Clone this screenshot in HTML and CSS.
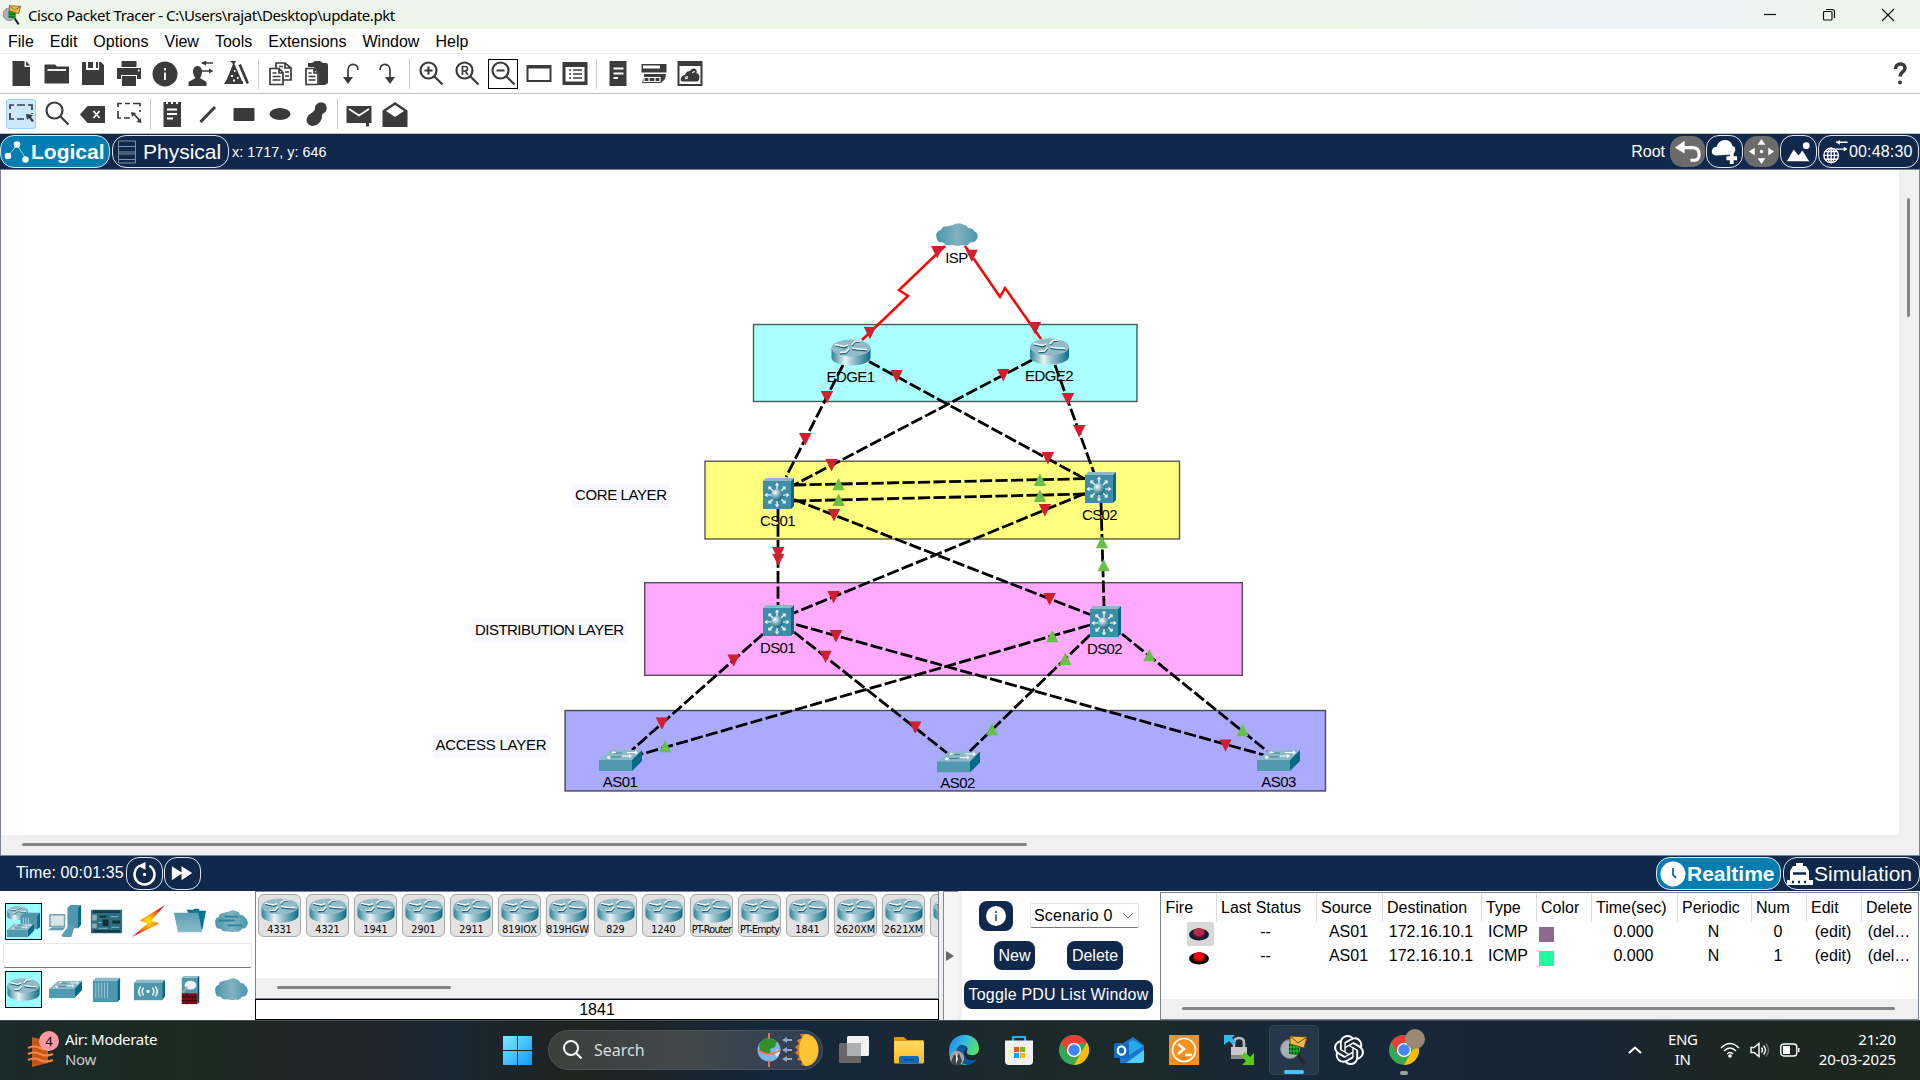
FILE: index.html
```html
<!DOCTYPE html>
<html lang="en">
<head>
<meta charset="utf-8">
<title>Cisco Packet Tracer</title>
<link rel="stylesheet" href="styles.css">
</head>
<body>
<svg class="defs" aria-hidden="true">
  <defs>
    <linearGradient id="metal" x1="0" x2="1" y1="0" y2="0"><stop offset="0" stop-color="#2b8199"/><stop offset=".35" stop-color="#e9f3f5"/><stop offset=".55" stop-color="#9cc4ce"/><stop offset="1" stop-color="#0b6d88"/></linearGradient>
    <linearGradient id="haze" x1="0" x2="1" y1="0" y2="0"><stop offset="0" stop-color="#4b97ad"/><stop offset=".5" stop-color="#80b2c1"/><stop offset="1" stop-color="#4b97ad"/></linearGradient>
    <linearGradient id="paper" x1="0" x2="0" y1="0" y2="1"><stop offset="0" stop-color="#5a9fb2"/><stop offset="1" stop-color="#8bbcc9"/></linearGradient>
    <radialGradient id="ball" cx=".35" cy=".3" r=".75"><stop offset="0" stop-color="#fff"/><stop offset=".5" stop-color="#75a9b8"/><stop offset="1" stop-color="#0b5d75"/></radialGradient>
    <radialGradient id="spark" cx=".5" cy=".5" r=".5"><stop offset="0" stop-color="#fff200"/><stop offset="1" stop-color="#f01818"/></radialGradient>
    <linearGradient id="win" x1="0" x2="1" y1="0" y2="1"><stop offset="0" stop-color="#7cecff"/><stop offset="1" stop-color="#1397f5"/></linearGradient>
    <linearGradient id="edgeg" x1="0" x2="1" y1="0" y2=".4"><stop offset="0" stop-color="#1b86dc"/><stop offset=".5" stop-color="#2fb8e6"/><stop offset="1" stop-color="#5fdf5c"/></linearGradient>
    <linearGradient id="fold" x1="0" x2="0" y1="0" y2="1"><stop offset="0" stop-color="#ffdb62"/><stop offset="1" stop-color="#f8bb22"/></linearGradient>
  </defs>
  <symbol id="router" viewBox="0 0 40 27" preserveAspectRatio="none">
    <path d="M.5 9v9.500C.5 23 9 26.500 20 26.500S39.500 23 39.500 18.500V9z" fill="url(#metal)"/>
    <ellipse cx="20" cy="9" rx="19.500" ry="8.500" fill="#92bac8"/>
    <path d="M4.500 6.500l9 2 3-1.500M21 7l2-3.500 6-1M21 10l6 1 9 .5M18 10.500l-3 3.500-6 .5" fill="none" stroke="#17677d" stroke-width="2.200"/>
    <path d="M4 5.500l9 2 4-1.500M20.500 6l3-3.500 6-.5M21 9l6 1 9 .5M18 9.500l-3 3.500-6 .5" fill="none" stroke="#fff" stroke-width="1.500"/>
  </symbol>
  <symbol id="l3" viewBox="0 0 31 31">
    <path d="M0 3l3-3h28l-3 3z" fill="#8db9c6"/><path d="M28 3l3-3v28l-3 3z" fill="#046a85"/>
    <rect y="3" width="28" height="28" fill="#3f8ea8"/>
    <g stroke="#fff" stroke-width="1.200" fill="none"><path d="M14 12V6M14 22v6M9 17H3M19 17h6M10.500 13.500L6 9M17.500 13.500L22 9M10.500 20.500L6 25M17.500 20.500L22 25"/><path d="M12.500 7.500L14 5.500l1.500 2M12.500 26.500l1.500 2 1.500-2M4.500 15.500l-2 1.500 2 1.500M23.500 15.500l2 1.500-2 1.500M6 11.500V9h2.500M19.500 9H22v2.500M6 22.500V25h2.500M19.500 25H22v-2.500"/></g>
    <circle cx="14" cy="17" r="6" fill="url(#ball)"/>
  </symbol>
  <symbol id="switch" viewBox="0 0 43 21" preserveAspectRatio="none">
    <path d="M0 10L12 0h31L33 10z" fill="#8db9c6"/><path d="M33 10L43 0v11L33 21z" fill="#046a85"/><path d="M0 10h33v11H0z" fill="#5199ae"/>
    <path d="M15 3h8M10 7h12" stroke="#3f8197" stroke-width="1"/>
    <path d="M28 2.500h9M36 1l2 1.500-2 1.500M23 6h8M30 4.500L32 6l-2 1.500M17 2.500h-3M15 1.500l-2 1.500M12 7h-3M10 6L8.500 7.500 11 8.500" stroke="#fff" stroke-width="1.100" fill="none"/>
  </symbol>
  <symbol id="cloud" viewBox="0 0 42 23" preserveAspectRatio="none">
    <path d="M7 19.500Q1 20 .5 14.500Q-1 8.500 5 7Q6 3 10 3.500Q14 2.500 17 2Q22-1 27 1.500Q31 2 32 5Q37 5 38 8Q42.500 10 41.500 14.500Q40 19.500 34.500 19.500Q31 24 26 22.300Q20 23.500 16 22Q10 23.500 7 19.500z" fill="url(#haze)"/>
  </symbol>
  <symbol id="down" viewBox="0 0 12 12"><path d="M0 0h12L6 12z" fill="#d01f2f"/></symbol>
  <symbol id="up" viewBox="0 0 12 12"><path d="M0 12h12L6 0z" fill="#6abf4b"/></symbol>
  <symbol id="chrome" viewBox="0 0 30 30">
    <circle cx="15" cy="15" r="15" fill="#35a852"/><path d="M15 30l6.500-11.500L28 7.500a15 15 0 0 1-13 22.500z" fill="#fbbc04"/><path d="M2 7.500L8.800 18.500 15 8h13A15 15 0 0 0 2 7.500z" fill="#e94235"/>
    <circle cx="15" cy="15" r="7.200" fill="#fff"/><circle cx="15" cy="15" r="5.700" fill="#4285f4"/>
  </symbol>
  <symbol id="tracer" viewBox="0 0 28 30">
    <path d="M18 20l6 9" stroke="#252525" stroke-width="3"/><circle cx="10" cy="14" r="9.500" fill="#a8b0b3" stroke="#798386"/><path d="M9 9l10-2v13l-10-1z" fill="#073f0c"/><path d="M11 8.500v11M14 8v12M17 7.500v12M9 12h10M9 16h10" stroke="#18dc36" stroke-width="1"/>
    <path d="M10 1l17 1-3 11-14-4z" fill="#ecbd4c" stroke="#6d4a10"/><path d="M10 1l8 7 9-6" fill="none" stroke="#6d4a10"/>
  </symbol>
</svg>

<div class="app">
  <header class="title">
    <svg class="title-icon" viewBox="0 0 28 30"><use href="#tracer"/></svg>
    <span class="title-text">Cisco Packet Tracer - C:\Users\rajat\Desktop\update.pkt</span>
    <svg class="win-btn" viewBox="0 0 14 14"><path d="M1 6.500h12" class="wl"/></svg>
    <svg class="win-btn" viewBox="0 0 14 14"><path d="M4 1.500h6a2.500 2.500 0 0 1 2.500 2.500v6M2.500 3.500h6.500a1 1 0 0 1 1 1V11a1 1 0 0 1-1 1H2.500a1 1 0 0 1-1-1V4.500a1 1 0 0 1 1-1z" class="wl"/></svg>
    <svg class="win-btn" viewBox="0 0 14 14"><path d="M1 1l12 12M13 1L1 13" class="wl"/></svg>
  </header>

  <nav class="menu"><span>File</span><span>Edit</span><span>Options</span><span>View</span><span>Tools</span><span>Extensions</span><span>Window</span><span>Help</span></nav>

  <div class="toolbar">
    <span class="tb"><svg viewBox="0 0 26 26"><path d="M4.500 0h12v6H22v19H4.500zM18 0l4 4.500h-4z"/></svg></span>
    <span class="tb"><svg viewBox="0 0 26 26"><path d="M.5 3.500H11l2 2h12v17H.5z"/><path d="M3.500 9H22" class="w"/></svg></span>
    <span class="tb"><svg viewBox="0 0 26 26"><path d="M2 1h4v8h13V1h2l3 3v20H2zM8 1h5v6H8zM16 1h2v6h-2z"/></svg></span>
    <span class="tb"><svg viewBox="0 0 26 26"><path d="M5.500 0h15v6h-15zM1 7h24v11h-4v-4H5v4H1zM6 15h14v10H6z"/><path d="M22 9.500h1.500" class="w"/></svg></span>
    <span class="tb"><svg viewBox="0 0 26 26"><circle cx="13" cy="13" r="12.500"/><path d="M13 11.500V19M13 7v2.500" class="w"/></svg></span>
    <span class="tb"><svg viewBox="0 0 26 26"><path d="M.5 25v-4l7-4c-4-5-3-12 2-12s6 7 2.500 12l6.500 4v4z"/><path d="M14 2h11M12 10h12" class="l"/><path d="M18-.5L13 2l5 2.500zM21 7.500l4.500 2.500-4.500 2.500z"/></svg></span>
    <span class="tb"><svg viewBox="0 0 26 26"><path d="M6 0h6l-1.500 3L18 20h1v3H0l3-5L9 3zM14.500 4l2.500-1 8 19-2.500 1z"/><path d="M7 15h2M10 10h1.500M9 19.500h2M13 17h1.500" class="w"/></svg></span>
    <i class="sep"></i>
    <span class="tb"><svg viewBox="0 0 26 26"><path d="M9 7V2h9l6 5v12h-8M3 7.500h9l4 4v12H3zM18 2v5h6M12 7v5h4M5.500 12h4M5.500 15.500h8M5.500 19h8M12 5.500h4M18 11h4M18 15h4" class="l"/></svg></span>
    <span class="tb"><svg viewBox="0 0 26 26"><path d="M5 2h4l3-2h5l3 2h3q2 0 2 2v18l-3 2H16V12l-5-6H5z"/><path d="M3 7.500h8l4 4v12H3zM11 7v5h4M5.500 12h3M5.500 15.500h7M5.500 19h7" class="l"/></svg></span>
    <span class="tb"><svg viewBox="0 0 26 26"><path d="M19 9c0-8-10-7-10 0v9" class="l"/><path d="M4 16h10l-5 7z"/></svg></span>
    <span class="tb"><svg viewBox="0 0 26 26"><path d="M5 9c0-8 10-7 10 0v9" class="l"/><path d="M10 16h10l-5 7z"/></svg></span>
    <i class="sep"></i>
    <span class="tb"><svg viewBox="0 0 26 26"><circle cx="10.500" cy="9.500" r="8" class="m"/><path d="M16 15l8.500 8.500M10.500 5.500v8M6.500 9.500h8" class="m"/></svg></span>
    <span class="tb"><svg viewBox="0 0 26 26"><circle cx="10.500" cy="9.500" r="8" class="m"/><path d="M16 15l8.500 8.500" class="m"/><path d="M8.500 14V5.500h2.500q2.500 0 2.500 2.200T11 10H8.500M11 10l3 4" class="l"/></svg></span>
    <span class="tb boxed"><svg viewBox="0 0 26 26"><circle cx="10.500" cy="9.500" r="8" class="m"/><path d="M16 15l8.500 8.500M6.500 9.500h8" class="m"/></svg></span>
    <span class="tb"><svg viewBox="0 0 26 26"><path d="M.5 4h25v17H.5zM2.500 7.500V19h21V7.500z" fill-rule="evenodd"/></svg></span>
    <span class="tb"><svg viewBox="0 0 26 26"><path d="M.5 1h25v23H.5zM3.500 6v14.500h19V6z" fill-rule="evenodd"/><path d="M7 9h2M7 13h2M7 17h2M11 9h9M11 13h9M11 17h9" class="l"/></svg></span>
    <i class="sep"></i>
    <span class="tb"><svg viewBox="0 0 26 26"><path d="M4.500 0h17v25h-17z"/><path d="M8.500 7.500h10M8.500 12.500h10M8.500 17h4.500" class="w"/></svg></span>
    <span class="tb"><svg viewBox="0 0 26 26"><path d="M.5 3h25v8.500H.5zM2 4.500v3h17v-3zM3 13h22l-1 5-4 4H1l2-6z" fill-rule="evenodd"/><path d="M3 16.500h16v4H3zM8 17v4M14 17v4" class="w thin"/></svg></span>
    <span class="tb"><svg viewBox="0 0 26 26"><path d="M.5 0h25v25H.5zM2.500 5v18h21V5z" fill-rule="evenodd"/><path d="M5 20.500q-2-.5-1-3.500 1-3 4-3 1-4 5-4 1-3 4.500-2.500 3 1 2 4.500 3 1 3 4t-2 4.500z"/><path d="M8 16.500l3-1M15 11.500l3-1M8 18l3-1" class="w thin"/></svg></span>
    <span class="tb help"><svg viewBox="0 0 26 26"><path d="M8.500 8c0-6.500 9.500-6.500 9.500-1 0 4-5 4-5 8.500" fill="none" stroke="#3b3b3b" stroke-width="3.600"/><circle cx="13" cy="21.500" r="2"/></svg></span>
  </div>

  <div class="toolbar">
    <span class="tb selected"><svg viewBox="0 0 26 26"><path d="M2 8V4h4M9 4h8M20 4h4v5M2 12v6h4M9 18h7M24 12v1" class="l"/><path d="M18 13l7 1-2 2 3 4-2 1-3-4-2 2z"/></svg></span>
    <span class="tb"><svg viewBox="0 0 26 26"><circle cx="10.500" cy="9.500" r="8" class="m"/><path d="M16 15l8.500 8.500" class="m"/></svg></span>
    <span class="tb"><svg viewBox="0 0 26 26"><path d="M0 13.500L7.500 5H25v17H7.500z"/><path d="M13.500 10l6 7M19.500 10l-6 7" class="w"/></svg></span>
    <span class="tb"><svg viewBox="0 0 26 26"><path d="M2 6V2.500h4M9 2.500h5M17 2.500h7v3M2 10v7h3M8 17h6M24 9v2M18 13l6 7" class="l"/><path d="M15 11l5 1-4 4zM25.500 22l-5-1 4-4z"/></svg></span>
    <i class="sep"></i>
    <span class="tb"><svg viewBox="0 0 26 26"><path d="M4.500 1H7v2h2V1h3v2h2V1h3v2h2V1h3v25H4.500z"/><path d="M8 8.500h10M8 13h10M8 17.500h6" class="w"/></svg></span>
    <span class="tb"><svg viewBox="0 0 26 26"><path d="M5.500 21L20 6" stroke="#3b3b3b" stroke-width="3"/></svg></span>
    <span class="tb"><svg viewBox="0 0 26 26"><rect x="2.500" y="7" width="21" height="13" rx="1"/></svg></span>
    <span class="tb"><svg viewBox="0 0 26 26"><ellipse cx="13" cy="13" rx="10.500" ry="6"/></svg></span>
    <span class="tb"><svg viewBox="0 0 26 26"><path d="M12 7c0-4 4-6 7-5.500 4 .5 6 5 4 8.500-1 2-4 2-4 5 0 6-5 10-10 10-5-1-7-6-4-10 2-3 7-4 7-8z"/></svg></span>
    <i class="sep"></i>
    <span class="tb"><svg viewBox="0 0 26 26"><path d="M.5 5h25v17H23v3.500h-3V22H.5z"/><path d="M3 8l10 6.500L23 8" class="w"/></svg></span>
    <span class="tb"><svg viewBox="0 0 26 26"><path d="M.5 9.500L13 1l12.500 8.500V26H.5zM4 10l9 6 9-6-9-6z" fill-rule="evenodd"/></svg></span>
  </div>

  <div class="bluebar">
    <span class="mode on logical"><svg viewBox="0 0 26 24"><path d="M4 16L13 5l9 14" stroke="#9bd3e6" fill="none"/><circle cx="4" cy="16" r="3.300"/><circle cx="13" cy="4.500" r="3.300"/><circle cx="21.500" cy="19.500" r="3.300"/></svg>Logical</span>
    <span class="mode physical"><svg viewBox="0 0 26 24"><path d="M4.500 1h17v22h-17zM4.500 6.500h17M4.500 12h17M4.500 14h17M4.500 19.500h17" fill="none" stroke="#8391a8"/></svg>Physical</span>
    <span class="coords">x: 1717, y: 646</span>
    <span class="root">Root</span>
    <span class="pill grey"><svg viewBox="0 0 36 32"><path d="M14 12h9q7 0 7 7t-7 6h-2" fill="none" stroke="#fff" stroke-width="3.200"/><path d="M5 12l10-7v13z"/></svg></span>
    <span class="pill"><svg viewBox="0 0 36 32"><path d="M9 20q-5-1-4-5 1-4 5-4 1-6 8-7 7 0 8 6 4 1 3 5t-4 4z"/><path d="M20 23h11M25.500 18v11" stroke="#fff" stroke-width="4"/></svg></span>
    <span class="pill grey"><svg viewBox="0 0 36 32"><path d="M14 9l4-6 4 6zM14 23l4 6 4-6zM11 12v8l-6-4zM25 12v8l6-4z"/><circle cx="18" cy="16" r="1.700"/></svg></span>
    <span class="pill"><svg viewBox="0 0 36 32"><path d="M6 26l7-12 5 6 4-5 7 11z"/><circle cx="26" cy="10" r="3.500"/></svg></span>
    <span class="clock"><svg viewBox="0 0 28 32"><g fill="none" stroke="#fff" stroke-width="1.400"><circle cx="10" cy="20" r="7.500"/><ellipse cx="10" cy="20" rx="3.500" ry="7.500"/><path d="M10 12v16M2.500 20h15M4 16h12M4 24h12M15 6.500h12M15 13.500h10"/></g><path d="M19 4v5l-4-2.500zM23 11v5l4-2.500z"/></svg>00:48:30</span>
  </div>

  <main class="workspace">
    <svg class="topology" viewBox="0 170 1899 665" width="1899" height="665">
      <g stroke="#000" stroke-opacity=".65" stroke-width="1.400">
        <rect x="753.500" y="324.500" width="383.500" height="77" fill="#aaffff"/>
        <rect x="705" y="461.200" width="474.500" height="77.800" fill="#ffff7f"/>
        <rect x="644.700" y="582.700" width="597.600" height="92.600" fill="#ffaaff"/>
        <rect x="565" y="710.500" width="760.500" height="80.500" fill="#aaaaff"/>
      </g>
      <g fill="#f8f9ff"><rect x="572" y="483.500" width="97.500" height="24.500"/><rect x="471.500" y="618.500" width="155" height="24"/><rect x="433" y="733" width="116.500" height="24"/></g>
      <g class="layer">
        <text x="575" y="499.700" textLength="92">CORE LAYER</text>
        <text x="475" y="634.700" textLength="149">DISTRIBUTION LAYER</text>
        <text x="435.500" y="749.700" textLength="111">ACCESS LAYER</text>
      </g>
      <g class="names">
        <text x="956.500" y="262.500">ISP</text><text x="850.500" y="381.500">EDGE1</text><text x="1049" y="381">EDGE2</text>
        <text x="777.500" y="525.500">CS01</text><text x="1099.500" y="519.500">CS02</text><text x="777.500" y="652.500">DS01</text><text x="1104.500" y="653.500">DS02</text>
        <text x="620" y="786.500">AS01</text><text x="957.500" y="787.500">AS02</text><text x="1278.500" y="786.500">AS03</text>
      </g>
      <g class="serial"><path d="M945 246L899 290l9 6-46 44"/><path d="M965 246l35 51 5-9 36 51"/></g>
      <g class="cable">
        <path d="M843 365L786 477"/><path d="M869 361.500L1085 479"/><path d="M1032 360L794 485"/><path d="M1055 365l39 108"/>
        <path d="M794 485l291-6.300"/><path d="M794 501l291-7"/><path d="M794 499.500l296 115"/><path d="M1085 493.500L794 613"/>
        <path d="M778 509v96"/><path d="M1101 503l3 103"/><path d="M763 634L632 750"/><path d="M794 632l153 121"/>
        <path d="M796 624.500L1264 755"/><path d="M1090 625L642 754"/><path d="M1090 635L969 752"/><path d="M1122 634l145 117"/>
      </g>
      <use href="#cloud" x="936" y="223" width="42" height="23"/>
      <use href="#router" x="831" y="339" width="40" height="27"/><use href="#router" x="1029.500" y="338" width="40" height="27"/>
      <use href="#l3" x="763" y="478" width="31" height="31"/><use href="#l3" x="1085" y="472" width="31" height="31"/>
      <use href="#l3" x="763" y="605" width="31" height="31"/><use href="#l3" x="1090" y="606" width="31" height="31"/>
      <use href="#switch" x="599" y="750" width="43" height="21"/><use href="#switch" x="937" y="751.500" width="43" height="21"/><use href="#switch" x="1257" y="750" width="43" height="21"/>
      <g transform="translate(-6 0)">
        <use href="#down" x="937" y="246" width="12.500" height="12.500"/><use href="#down" x="971.500" y="249.500" width="12.500" height="12.500"/><use href="#down" x="869.700" y="326.700" width="12.500" height="12.500"/><use href="#down" x="1034.700" y="322" width="12.500" height="12.500"/>
        <use href="#down" x="896.300" y="370" width="12.500" height="12.500"/><use href="#down" x="1003" y="369" width="12.500" height="12.500"/><use href="#down" x="826.700" y="391" width="12.500" height="12.500"/><use href="#down" x="1067.700" y="393" width="12.500" height="12.500"/>
        <use href="#down" x="805" y="433" width="12.500" height="12.500"/><use href="#down" x="1079" y="425" width="12.500" height="12.500"/><use href="#down" x="831.300" y="459" width="12.500" height="12.500"/><use href="#down" x="1047.700" y="452" width="12.500" height="12.500"/>
        <use href="#down" x="833.700" y="509" width="12.500" height="12.500"/><use href="#down" x="1044.700" y="504" width="12.500" height="12.500"/><use href="#down" x="778" y="547" width="12.500" height="12.500"/><use href="#down" x="778" y="553.500" width="12.500" height="12.500"/>
        <use href="#down" x="833.300" y="591" width="12.500" height="12.500"/><use href="#down" x="1049.300" y="593" width="12.500" height="12.500"/><use href="#down" x="835.700" y="630" width="12.500" height="12.500"/><use href="#down" x="825.300" y="650.500" width="12.500" height="12.500"/>
        <use href="#down" x="733.300" y="654.300" width="12.500" height="12.500"/><use href="#down" x="661.700" y="717.300" width="12.500" height="12.500"/><use href="#down" x="915" y="721.300" width="12.500" height="12.500"/><use href="#down" x="1225.300" y="739.300" width="12.500" height="12.500"/>
        <use href="#up" x="838.300" y="478" width="12.500" height="12.500"/><use href="#up" x="1039.700" y="473.500" width="12.500" height="12.500"/><use href="#up" x="838.300" y="493.500" width="12.500" height="12.500"/><use href="#up" x="1039.700" y="489.500" width="12.500" height="12.500"/>
        <use href="#up" x="1101.600" y="536" width="12.500" height="12.500"/><use href="#up" x="1103.300" y="559" width="12.500" height="12.500"/><use href="#up" x="1052" y="630" width="12.500" height="12.500"/><use href="#up" x="1065" y="652.500" width="12.500" height="12.500"/>
        <use href="#up" x="991.700" y="723" width="12.500" height="12.500"/><use href="#up" x="665" y="740" width="12.500" height="12.500"/><use href="#up" x="1149" y="649" width="12.500" height="12.500"/><use href="#up" x="1242.300" y="724" width="12.500" height="12.500"/>
      </g>
    </svg>
    <div class="vscroll"><i></i></div>
    <div class="hscroll"><i></i></div>
  </main>

  <div class="bluebar timebar">
    <span class="time">Time: 00:01:35</span>
    <span class="pill"><svg viewBox="0 0 36 32"><path d="M13 8a10.300 10.300 0 1 0 10 0" fill="none" stroke="#fff" stroke-width="2.600"/><path d="M11 8l8-4v8z"/><circle cx="18" cy="17" r="1.700"/></svg></span>
    <span class="pill"><svg viewBox="0 0 36 32"><path d="M7 8.500l11 7-11 7.500zM17 8.500l11 7-11 7.500z"/></svg></span>
    <span class="mode on realtime"><svg viewBox="0 0 26 26"><circle cx="13" cy="13" r="12.500"/><path d="M13 7v7l3 3" stroke="#0b6da0" stroke-width="1.800" fill="none"/></svg>Realtime</span>
    <span class="mode simulation"><svg viewBox="0 0 26 26"><path d="M3 19V10l3-5h3V2h7v3h3l3 5v9zM0 19h26v5H0z"/><path d="M6 12.500h13M5 21h2M11 21h2M17 21h2" stroke="#0f284c" stroke-width="2.400"/></svg>Simulation</span>
  </div>

  <section class="bottom">
    <div class="cats">
      <div class="catrow">
        <span class="cat sel"><svg viewBox="0 0 36 36"><use href="#router" x="1" y="2" width="22" height="15"/><path d="M15 12l4-3h16l-3 3v14H15z" fill="#4f97ac"/><path d="M32 12l3-3v15l-3 2z" fill="#046a85"/><path d="M18 14v8M20.500 14v8M23 14v8" stroke="#a9cdd7"/><use href="#switch" x="1" y="20" width="28" height="14"/></svg></span>
        <span class="cat"><svg viewBox="0 0 36 36"><path d="M20 4l3-3h11v20l-3 4H20z" fill="#4f97ac"/><path d="M31 4l3-3v20l-3 4z" fill="#046a85"/><path d="M2 11h15v12H2z" fill="#d8e6ea" stroke="#6fa5b5" stroke-width="1.500"/><path d="M0 27l4-3h14l-3 3zM14 32l8-11h6l-4 13h-9z" fill="#5c9fb2"/></svg></span>
        <span class="cat"><svg viewBox="0 0 36 36"><path d="M2 6h32v24H2z" fill="#2a6e83"/><path d="M4 8h28M4 28h28" stroke="#133c49" stroke-width="2.500"/><path d="M3 11h5v6H3zM3 20h5v5H3z" fill="#8ba9b2"/><path d="M14 16h6v7h-6zM24 17h8v3h-8zM11 12h7v2h-7z" fill="#122f39"/><path d="M10 19h3M22 13h8M23 24h8M10 25h9" stroke="#8db6c2"/></svg></span>
        <span class="cat"><svg viewBox="0 0 36 36"><path d="M35 1L9 17l8 3L1 34l28-14-8-3z" fill="url(#spark)"/></svg></span>
        <span class="cat"><svg viewBox="0 0 36 36"><path d="M14 6h7l1-1h5v2h7l-4 20-8-6z" fill="#06738c"/><path d="M1 9h25l4 20H5z" fill="url(#paper)"/></svg></span>
        <span class="cat"><svg viewBox="0 0 36 36"><use href="#cloud" x="1" y="6" width="34" height="23"/><path d="M11 13h14M5 17h16M14 22h15" stroke="#2e819a" stroke-width="2"/></svg></span>
      </div>
      <div class="catsearch"></div>
      <div class="catrow">
        <span class="cat sel"><svg viewBox="0 0 36 36"><use href="#router" x="1" y="6" width="34" height="24"/></svg></span>
        <span class="cat"><svg viewBox="0 0 36 36"><use href="#switch" x="1" y="9" width="34" height="18"/></svg></span>
        <span class="cat"><svg viewBox="0 0 36 36"><path d="M4 9l3-3h25l-3 3z" fill="#8db9c6"/><path d="M29 9l3-3v22l-3 3z" fill="#046a85"/><path d="M4 9h25v22H4z" fill="#4f97ac"/><path d="M7 11v16M10 11v16M13 11v16M16 11v16M19 11v16" stroke="#9cc5d1"/></svg></span>
        <span class="cat"><svg viewBox="0 0 36 36"><path d="M3 11l3-3h29l-3 3z" fill="#8db9c6"/><path d="M32 11l3-3v17l-3 4z" fill="#046a85"/><path d="M3 11h29v18H3z" fill="#4f97ac"/><g fill="none" stroke="#fff" stroke-width="1.400"><path d="M13 16q-3 4 0 8M10 15q-4 5 0 10M22 16q3 4 0 8M25 15q4 5 0 10"/></g><circle cx="17.500" cy="20" r="1.700" fill="#fff"/></svg></span>
        <span class="cat"><svg viewBox="0 0 36 36"><path d="M9 6l2-2h16l-2 2z" fill="#8db9c6"/><path d="M25 6l2-2v27l-2 2z" fill="#044b60"/><path d="M9 6h16v17H9z" fill="#4f97ac"/><path d="M9 22h16v11H9z" fill="#7d0d12"/><path d="M9 25.500h16M9 29.500h16M14 22v3M20 26v3M14 30v3" stroke="#30080a"/><ellipse cx="18" cy="13.500" rx="6" ry="4.500" fill="#eef4f5"/><path d="M15 15l-5 6" stroke="#bda5a3" stroke-width="1.500"/></svg></span>
        <span class="cat"><svg viewBox="0 0 36 36"><use href="#cloud" x="1" y="6" width="34" height="23"/></svg></span>
      </div>
    </div>

    <div class="devices">
      <div class="devlist">
        <div class="strip">
          <span class="dev"><svg><use href="#router"/></svg>4331</span><span class="dev"><svg><use href="#router"/></svg>4321</span><span class="dev"><svg><use href="#router"/></svg>1941</span><span class="dev"><svg><use href="#router"/></svg>2901</span><span class="dev"><svg><use href="#router"/></svg>2911</span><span class="dev"><svg><use href="#router"/></svg>819IOX</span><span class="dev"><svg><use href="#router"/></svg>819HGW</span><span class="dev"><svg><use href="#router"/></svg>829</span><span class="dev"><svg><use href="#router"/></svg>1240</span><span class="dev tight"><svg><use href="#router"/></svg>PT-Router</span><span class="dev tight"><svg><use href="#router"/></svg>PT-Empty</span><span class="dev"><svg><use href="#router"/></svg>1841</span><span class="dev"><svg><use href="#router"/></svg>2620XM</span><span class="dev"><svg><use href="#router"/></svg>2621XM</span><span class="dev"><svg><use href="#router"/></svg></span>
        </div>
        <div class="devscroll"><i></i></div>
      </div>
      <div class="devname">1841</div>
    </div>

    <div class="splitter"><svg viewBox="0 0 8 10"><path d="M0 0l8 5-8 5z" fill="#666"/></svg></div>

    <div class="scenario">
      <div class="srow first"><span class="info"><svg viewBox="0 0 20 20"><circle cx="10" cy="10" r="10" fill="#fff"/><path d="M10 8.500V15M10 5v2" stroke="#5f6f89" stroke-width="2"/></svg></span>
        <span class="combo">Scenario 0<svg viewBox="0 0 10 6"><path d="M.5.5L5 5 9.500.5" fill="none" stroke="#666"/></svg></span></div>
      <div class="srow second"><span class="btn new">New</span><span class="btn del">Delete</span></div>
      <div class="srow"><span class="btn toggle">Toggle PDU List Window</span></div>
    </div>

    <div class="pdu">
      <table>
        <colgroup><col class="c55"><col class="c100"><col class="c66"><col class="c99"><col class="c55"><col class="c55"><col class="c86"><col class="c74"><col class="c55"><col class="c55"><col></colgroup>
        <thead><tr><th>Fire</th><th>Last Status</th><th>Source</th><th>Destination</th><th>Type</th><th>Color</th><th>Time(sec)</th><th>Periodic</th><th>Num</th><th>Edit</th><th>Delete</th></tr></thead>
        <tbody>
          <tr><td><span class="fire dim"><svg viewBox="0 0 20 14"><ellipse cx="10" cy="7.500" rx="10" ry="6" fill="#0b2138"/><ellipse cx="10" cy="7" rx="6" ry="4" fill="#6d1228"/><ellipse cx="10" cy="5" rx="5.500" ry="4" fill="#b52a44"/></svg></span></td><td>--</td><td>AS01</td><td>172.16.10.1</td><td>ICMP</td><td><i class="sw plum"></i></td><td>0.000</td><td>N</td><td>0</td><td>(edit)</td><td>(del…</td></tr>
          <tr><td><span class="fire"><svg viewBox="0 0 20 14"><ellipse cx="10" cy="7.500" rx="10" ry="6" fill="#000"/><ellipse cx="10" cy="7" rx="6" ry="4" fill="#a00000"/><ellipse cx="10" cy="5" rx="5.500" ry="4" fill="#fb0000"/></svg></span></td><td>--</td><td>AS01</td><td>172.16.10.1</td><td>ICMP</td><td><i class="sw mint"></i></td><td>0.000</td><td>N</td><td>1</td><td>(edit)</td><td>(del…</td></tr>
        </tbody>
      </table>
      <div class="pduscroll"><i></i></div>
    </div>
  </section>

  <footer class="taskbar">
    <div class="weather">
      <svg viewBox="0 0 32 36"><path d="M5 6l16 4v22L5 36z" fill="#c9551b"/><path d="M1 17q6-3 12 0t13 0M1 23q6-3 12 0t13 0M1 29q6-3 12 0t13 0" fill="none" stroke="#f08a4b" stroke-width="2"/><circle cx="22" cy="10" r="10" fill="#ff98a1"/><text x="22" y="15" text-anchor="middle" class="badge">4</text></svg>
      <div class="wtext"><b>Air: Moderate</b><span>Now</span></div>
    </div>
    <div class="apps">
      <svg class="start" viewBox="0 0 29 29"><path d="M0 0h14v14H0zM15 0h14v14H15zM0 15h14v14H0zM15 15h14v14H15z" fill="url(#win)"/></svg>
      <div class="search">
        <svg class="glass" viewBox="0 0 20 20"><circle cx="8" cy="8" r="7" class="tl"/><path d="M13 13l5.500 5.500" class="tl"/></svg><span>Search</span>
        <svg class="earth" viewBox="0 0 62 34"><circle cx="12" cy="17" r="11.500" fill="#79b7e6"/><path d="M3 10q4-6 9-5l8 3-2 6-5 2 1 6-5-1-6-3-1-5z" fill="#338f2c"/><path d="M17 20l4-4 2 3-3 5z" fill="#dff0fa"/><path d="M12 0v6M12 27v7M1 17q11 8 22 0" stroke="#ee7457" stroke-width="1.800" fill="none"/><path d="M27 7h8M27 17h8M27 26h8" stroke="#93a4c4" stroke-width="2.200"/><path d="M25 7l5-3v6zM25 17l5-3v6zM25 26l5-3v6z" fill="#93a4c4"/><path d="M43 1l2 4-5 2 2 4-4 3 3 3-3 3 4 3-2 4 5 1-1 4 7 1V1z" fill="#e8781e"/><path d="M48 1c18 0 18 32 0 32-8-8-8-24 0-32z" fill="#fcc433"/></svg>
      </div>
      <svg viewBox="0 0 30 30"><rect y="8" width="22" height="20" rx="1.500" fill="#686868"/><rect x="8" y="1" width="22" height="20" rx="1.500" fill="#f2f2f2"/><path d="M8 8h14v13H8z" fill="#aeb0b1"/></svg>
      <svg viewBox="0 0 30 30"><path d="M0 6V3q0-1 1-1h9l3 3h16q1 0 1 2v3H0z" fill="#dd9811"/><rect y="6" width="30" height="22.500" rx="1.500" fill="url(#fold)"/><path d="M5 28.500V23q0-2 2-2h16q2 0 2 2v5.500z" fill="#0f6cbd"/><path d="M10 25h10" stroke="#0b4c8c" stroke-width="1.500"/></svg>
      <svg viewBox="0 0 30 30"><path d="M0 15C1-5 30-5 30 14q-1 7-8 6-5 0-4-4 1-2 0-4-7-5-10 2-3 11 11 16C6 30-1 25 0 15z" fill="url(#edgeg)"/><path d="M8 14q-4 13 11 16 6-1 9-6-7 3-11-1-4-5 1-11-6-4-10 2z" fill="#0b559e"/><circle cx="8" cy="23" r="7.200" fill="#a6a6a6"/><path d="M2 27l3-8 3 3 2-4 3 8-2 4H5z" fill="#444"/><path d="M7 18l2 6-2 5z" fill="#eee"/></svg>
      <svg viewBox="0 0 30 30"><path d="M9 7V2h12v5" fill="none" stroke="#24aee9" stroke-width="2.200"/><path d="M1 5.500h28V26q0 4-4 4H5q-4 0-4-4z" fill="#f1f1f1"/><path d="M10 12h5v5h-5z" fill="#f25022"/><path d="M16 12h5v5h-5z" fill="#7fba00"/><path d="M10 18h5v5h-5z" fill="#00a4ef"/><path d="M16 18h5v5h-5z" fill="#ffb900"/></svg>
      <svg viewBox="0 0 30 30"><use href="#chrome"/></svg>
      <svg viewBox="0 0 30 30"><path d="M6 10L19 2l11 8v15q0 3-3 3H6z" fill="#1b77cf"/><path d="M8 12L19 5l10 6-15 10z" fill="#28a8ea"/><path d="M12 28l18-13v10q0 3-3 3z" fill="#50d0f8"/><rect y="8" width="15" height="15" rx="1.500" fill="#0f6cbd"/><ellipse cx="7.500" cy="15.500" rx="3.700" ry="4.200" fill="none" stroke="#fff" stroke-width="2.200"/></svg>
      <svg viewBox="0 0 30 30"><path d="M0 0h30v30H0z" fill="#f7901e"/><circle cx="15" cy="15" r="11.500" fill="none" stroke="#fff" stroke-width="1.700"/><path d="M9 9l6 5-6 5M16 20h7" fill="none" stroke="#fff" stroke-width="2.600"/></svg>
      <svg viewBox="0 0 30 30"><path d="M10 12V8q0-5 5-5t5 5v4" fill="none" stroke="#b9b9b9" stroke-width="2.600"/><rect x="7" y="12" width="16" height="12" fill="#c9c9c9"/><path d="M7 20h16v4H7z" fill="#888"/><path d="M0 0h11L8 3l4 4-3 3-4-4-5 4z" fill="#35b7e8"/><path d="M30 30H18l4-4-5-5 4-4 5 5 4-4z" fill="#55ca18"/></svg>
      <span class="active"><svg viewBox="0 0 28 30"><use href="#tracer"/></svg><i></i></span>
      <svg viewBox="0 0 24 24"><path fill="#fff" d="M22.2819 9.8211a5.9847 5.9847 0 0 0-.5157-4.9108 6.0462 6.0462 0 0 0-6.5098-2.9A6.0651 6.0651 0 0 0 4.9807 4.1818a5.9847 5.9847 0 0 0-3.9977 2.9 6.0462 6.0462 0 0 0 .7427 7.0966 5.98 5.98 0 0 0 .511 4.9107 6.051 6.051 0 0 0 6.5146 2.9001A5.9847 5.9847 0 0 0 13.2599 24a6.0557 6.0557 0 0 0 5.7718-4.2058 5.9894 5.9894 0 0 0 3.9977-2.9001 6.0557 6.0557 0 0 0-.7475-7.0729zm-9.022 12.6081a4.4755 4.4755 0 0 1-2.8764-1.0408l.1419-.0804 4.7783-2.7582a.7948.7948 0 0 0 .3927-.6813v-6.7369l2.02 1.1686a.071.071 0 0 1 .038.052v5.5826a4.504 4.504 0 0 1-4.4945 4.4944zm-9.6607-4.1254a4.4708 4.4708 0 0 1-.5346-3.0137l.142.0852 4.783 2.7582a.7712.7712 0 0 0 .7806 0l5.8428-3.3685v2.3324a.0804.0804 0 0 1-.0332.0615L9.74 19.9502a4.4992 4.4992 0 0 1-6.1408-1.6464zM2.3408 7.8956a4.485 4.485 0 0 1 2.3655-1.9728V11.6a.7664.7664 0 0 0 .3879.6765l5.8144 3.3543-2.0201 1.1685a.0757.0757 0 0 1-.071 0l-4.8303-2.7865A4.504 4.504 0 0 1 2.3408 7.872zm16.5963 3.8558L13.1038 8.364 15.1192 7.2a.0757.0757 0 0 1 .071 0l4.8303 2.7913a4.4944 4.4944 0 0 1-.6765 8.1042v-5.6772a.79.79 0 0 0-.407-.667zm2.0107-3.0231l-.142-.0852-4.7735-2.7818a.7759.7759 0 0 0-.7854 0L9.409 9.2297V6.8974a.0662.0662 0 0 1 .0284-.0615l4.8303-2.7866a4.4992 4.4992 0 0 1 6.6802 4.66zM8.3065 12.863l-2.02-1.1638a.0804.0804 0 0 1-.038-.0567V6.0742a4.4992 4.4992 0 0 1 7.3757-3.4537l-.142.0805L8.704 5.459a.7948.7948 0 0 0-.3927.6813zm1.0976-2.3654l2.602-1.4998 2.6069 1.4998v2.9994l-2.5974 1.4997-2.6067-1.4997Z"/></svg>
      <span class="running"><svg viewBox="0 0 30 30"><use href="#chrome"/></svg><b></b><i></i></span>
    </div>
    <div class="tray">
      <svg class="chev" viewBox="0 0 14 8"><path d="M1 7l6-5.500L13 7" class="tl"/></svg>
      <div class="lang">ENG<br>IN</div>
      <svg class="ti" viewBox="0 0 20 16"><path d="M1 6q9-9 18 0M4 9q6-6 12 0M7 12q3-3 6 0" class="tl thin"/><circle cx="10" cy="14" r="1.800" fill="#fff"/></svg>
      <svg class="ti" viewBox="0 0 20 16"><path d="M1 5.500h3L9 1.500v13l-5-4H1zM11.500 5.500q2 2.500 0 5M13.500 3.500q4 4.500 0 9" class="tl thin"/><path d="M16 1.500q5 6.500 0 13" class="tl thin faint"/></svg>
      <svg class="ti" viewBox="0 0 20 16"><rect x=".8" y="2" width="16" height="12" rx="3" class="tl thin"/><path d="M3 4h7v8H3zM18 6h1.500v4H18z" fill="#fff"/></svg>
      <div class="date">21:20<br>20-03-2025</div>
    </div>
  </footer>
</div>
</body>
</html>
```
FILE: styles.css
```css
* { box-sizing: border-box; }
body { margin: 0; font: 16px/20px "Liberation Sans", Arial, sans-serif; color: #000; background: #fff; }
svg { display: block; flex: none; }
.defs { position: absolute; width: 0; height: 0; }
.app { width: 1920px; height: 1080px; display: flex; flex-direction: column; overflow: hidden; }

.title { height: 29px; flex: none; display: flex; align-items: center; background: linear-gradient(90deg, #edf5ec 0, #eff5ea 45%, #eff5ea 70%, #edf3f5 82%, #edf3f5 88%, #eef5eb 100%); padding: 0 16px 0 2px; }
.title-icon { width: 20px; height: 20px; }
.title-text { font: 15px/28px "Noto Sans", "Open Sans", sans-serif; letter-spacing: -.43px; margin-left: 6px; margin-right: auto; white-space: pre; }
.win-btn { width: 14px; height: 14px; margin-left: 45px; }
.title .win-btn:last-child { margin-right: 9px; }
.wl { fill: none; stroke: #111; stroke-width: 1.2; }

.menu { height: 25px; flex: none; border-bottom: 1px solid #f0f0f0; padding-left: 8px; display: flex; gap: 16px; line-height: 25px; }

.toolbar { height: 40px; flex: none; border-bottom: 1px solid #bfbfbf; display: flex; align-items: center; padding: 1px 0 0 2.500px; }
.tb { width: 36px; height: 30px; display: flex; align-items: center; justify-content: center; border: 1px solid transparent; }
.tb svg { width: 26px; height: 26px; fill: #3b3b3b; }
.tb.boxed { width: 30px; margin: 0 3px; border-color: #000; }
.tb.selected { width: 30px; margin: 0 3px; background: #cce8ff; border-color: #99d1ff; border-radius: 3px; }
.tb.help { margin-left: auto; margin-right: 2px; }
.sep { width: 1px; height: 30px; margin: 0 3px; background: #c8c8c8; }
.w { fill: none; stroke: #fff; stroke-width: 1.800; }
.l { fill: none; stroke: #3b3b3b; stroke-width: 1.700; }
.m { fill: none; stroke: #3b3b3b; stroke-width: 2.200; }
.thin { stroke-width: 1.200; }

.bluebar { height: 36px; flex: none; background: #0f284c; color: #fff; display: flex; align-items: center; border-bottom: 1px solid #7c8392; padding-right: 1px; }
.mode { height: 33px; border: 1px solid #dfe5ee; border-radius: 14px; display: flex; align-items: center; font-size: 21px; white-space: nowrap; }
.mode svg { fill: #fff; width: 26px; }
.mode.on { background: #027db0; font-weight: bold; }
.logical { width: 110px; padding-left: 3px; }
.logical svg { margin-right: 1px; }
.physical { width: 117px; margin-left: 2px; padding-left: 1px; }
.physical svg { margin-right: 3px; }
.coords { font-size: 14.400px; margin-left: 3px; }
.root { margin-left: auto; margin-right: 4px; }
.pill { width: 37px; height: 33px; border: 1px solid #dfe5ee; border-radius: 13px; margin-left: 1px; display: flex; }
.pill svg { width: 35px; height: 31px; fill: #fff; }
.pill.grey { width: 35px; height: 31px; background: #6b6b6b; border: 0; }
.clock { width: 101px; height: 33px; border: 1px solid #dfe5ee; border-radius: 13px; margin-left: 1px; display: flex; align-items: center; padding-left: 2px; letter-spacing: .15px; }
.clock svg { width: 28px; height: 31px; fill: #fff; }

.workspace { height: 686px; flex: none; display: grid; grid-template: 665px 21px / 1898px 20px; border-left: 1px solid #7c8392; border-right: 1px solid #7c8392; border-bottom: 1px solid #7c8392; overflow: hidden; background: #fff; }
.topology { margin-left: -1px; font: 15px "Liberation Sans", Arial, sans-serif; }
.names text { text-anchor: middle; font-size: 15px; letter-spacing: -.6px; }
.serial path { fill: none; stroke: #f00; stroke-width: 2.500; }
.cable path { fill: none; stroke: #000; stroke-width: 2.800; stroke-dasharray: 12.200 3.300; }
.vscroll { background: #f0f0f0; padding: 28px 0 0 8px; }
.vscroll i { display: block; width: 3px; height: 119px; border-radius: 2px; background: #858585; }
.hscroll { grid-column: 1 / 3; background: #f0f0f0; padding: 8px 0 0 21px; }
.hscroll i { display: block; width: 1005px; height: 3px; border-radius: 2px; background: #858585; }

.timebar { height: 35px; border: 0; padding-right: 0; }
.time { margin-left: 16px; width: 109px; white-space: nowrap; letter-spacing: .12px; padding-bottom: 1px; }
.realtime { width: 125px; margin-left: auto; padding-left: 3px; }
.realtime svg { margin-right: 1px; }
.simulation { width: 137px; margin-left: 2px; padding-left: 3px; }
.simulation svg { margin-right: 1px; }

.bottom { height: 129px; flex: none; display: flex; }
.cats { width: 255px; padding: 12px 3px 0; }
.catrow { display: flex; padding-left: 2px; height: 37px; gap: 4.700px; }
.cat { width: 37px; height: 37px; padding: 1px; }
.cat svg { width: 35px; height: 35px; }
.cat.sel { background: #9ff; border: 1px solid #111; padding: 0; }
.catsearch { height: 25px; margin: 3px 0; border: 1px solid #e8e8e8; border-bottom-color: #777; border-radius: 3px; }
.devices { width: 684px; display: flex; flex-direction: column; }
.devlist { height: 108px; border: 1px solid #7c8392; overflow: hidden; display: flex; flex-direction: column; justify-content: space-between; }
.strip { display: flex; gap: 5px; padding: 2px 0 0 2px; }
.dev { width: 43px; height: 43px; flex: none; background: #e2e2e2; border: 1px solid #aaa; border-radius: 6px; font: 9.600px/12px "DejaVu Sans", sans-serif; display: flex; flex-direction: column; align-items: center; white-space: nowrap; }
.dev svg { width: 38px; height: 25px; margin: 3px 0 1px; }
.tight { letter-spacing: -.75px; }
.devscroll { height: 20px; background: #f0f0f0; padding: 8px 0 0 21px; }
.devscroll i { display: block; width: 174px; height: 3px; border-radius: 2px; background: #858585; }
.devname { height: 21px; border: 1px solid #000; text-align: center; line-height: 19px; }
.splitter { width: 23px; border-left: 4px solid #f0f0f0; border-right: 4px solid #f0f0f0; background: #f5f5f5; box-shadow: inset 1px 1px #888; display: flex; align-items: center; padding-left: 3px; }
.splitter svg { width: 8px; height: 10px; }
.scenario { width: 198px; padding: 10px 0 0 2px; }
.srow { display: flex; align-items: center; height: 29px; }
.info { width: 34px; height: 30px; margin-left: 15px; background: #0f284c; border-radius: 8px; display: flex; align-items: center; justify-content: center; }
.info svg { width: 20px; height: 20px; }
.combo { margin-left: 17px; width: 109px; height: 25px; border: 1px solid #e5e5e5; border-bottom-color: #777; display: flex; align-items: center; justify-content: space-between; padding: 0 5px 0 3px; border-radius: 2px; white-space: nowrap; letter-spacing: .2px; }
.combo svg { width: 10px; height: 6px; }
.second { margin: 11px 0 10px; }
.btn { background: #0f284c; color: #fff; border-radius: 8px; height: 29px; line-height: 29px; text-align: center; white-space: nowrap; }
.new { width: 41px; margin-left: 30px; }
.del { width: 56px; margin-left: 32px; }
.toggle { width: 189px; letter-spacing: .17px; }
.pdu { width: 759px; height: 128px; margin-top: 1px; border: 1px solid #7c8392; display: flex; flex-direction: column; justify-content: space-between; }
.pdu table { width: 757px; table-layout: fixed; border-collapse: collapse; }
.c55 { width: 55px; } .c66 { width: 66px; } .c74 { width: 74px; } .c86 { width: 86px; } .c99 { width: 99px; } .c100 { width: 100px; }
.pdu th { height: 29px; padding: 0 0 0 4.500px; font-weight: normal; text-align: left; border-right: 1px solid #dcdcdc; white-space: nowrap; }
.pdu th:last-child { border: 0; }
.pdu td { height: 24px; padding: 0 1px 0 0; line-height: 20px; vertical-align: top; text-align: center; }
.fire { width: 27px; height: 24px; margin-left: 26px; display: flex; align-items: center; justify-content: center; border-radius: 2px; padding-right: 3px; }
.fire svg { width: 20px; height: 14px; }
.dim { background: #d8d8d8; }
.sw { display: block; width: 15px; height: 15px; margin: 5px 0 0 3px; }
.plum { background: #8f6a8f; }
.mint { background: #1efca0; }
.pduscroll { height: 20px; background: #f0f0f0; padding: 8px 0 0 21px; }
.pduscroll i { display: block; width: 713px; height: 3px; border-radius: 2px; background: #858585; }

.taskbar { height: 60px; flex: none; border-top: 1px solid #454d52; display: flex; align-items: center; color: #fff; font: 15px/20px "Noto Sans", "Open Sans", sans-serif; background: linear-gradient(90deg, #1b2a2a 0, #1b2b22 170px, #232527 330px, #192733 450px, #20231e 580px, #14273d 780px, #1b2830 950px, #1c2a27 1130px, #17273a 1300px, #182536 1580px, #1c2622 1730px, #1d2820 1920px); }
.weather { display: flex; width: 503px; padding: 0 0 4px 27px; align-items: center; }
.weather > svg { width: 32px; height: 36px; }
.badge { font-size: 13px; }
.wtext { margin-left: 6px; display: flex; flex-direction: column; letter-spacing: -.3px; }
.wtext b { font-weight: normal; }
.wtext span { color: #c9cdcb; }
.apps { display: flex; align-items: center; gap: 25px; padding-bottom: 1px; }
.apps > svg { width: 30px; height: 30px; }
.apps > .start { width: 29px; height: 29px; margin-right: -9px; }
.search { width: 275px; height: 40px; margin-right: -9px; border: 1px solid #4a5356; border-radius: 20px; background: linear-gradient(90deg, #3c403c, #40484b 50%, #2e3f55); display: flex; align-items: center; font-size: 16px; color: #d8dcde; }
.glass { width: 20px; height: 20px; margin: 0 11px 0 14px; }
.earth { width: 62px; height: 34px; margin-left: auto; margin-right: 3px; }
.tl { fill: none; stroke: #fff; stroke-width: 2; }
.tl.thin { stroke-width: 1.400; }
.faint { opacity: .35; }
.active { width: 50px; height: 50px; margin: 0 -10px; border-radius: 5px; background: #263749; border: 1px solid #34434f; display: flex; align-items: center; justify-content: center; position: relative; }
.active svg { width: 28px; height: 30px; }
.active i { position: absolute; width: 20px; height: 4px; left: 14px; bottom: 0; border-radius: 2px; background: #4cc2ff; }
.running { width: 30px; height: 30px; position: relative; }
.running svg { width: 30px; height: 30px; }
.running b { position: absolute; width: 20px; height: 20px; border-radius: 50%; left: 16px; top: -6px; background: #9b8975; }
.running i { position: absolute; width: 8px; height: 4px; left: 11px; bottom: -10px; border-radius: 2px; background: #9aa2ab; }
.tray { margin-left: auto; display: flex; align-items: center; padding: 0 24px 2px 0; letter-spacing: -.4px; }
.chev { width: 14px; height: 8px; }
.lang { width: 30px; margin: 0 22px 2px 26px; text-align: center; font-size: 15px; }
.ti { width: 20px; height: 16px; margin-right: 10px; }
.date { text-align: right; margin: 0 0 2px 9px; white-space: nowrap; font-size: 15px; letter-spacing: -.1px; }
```
